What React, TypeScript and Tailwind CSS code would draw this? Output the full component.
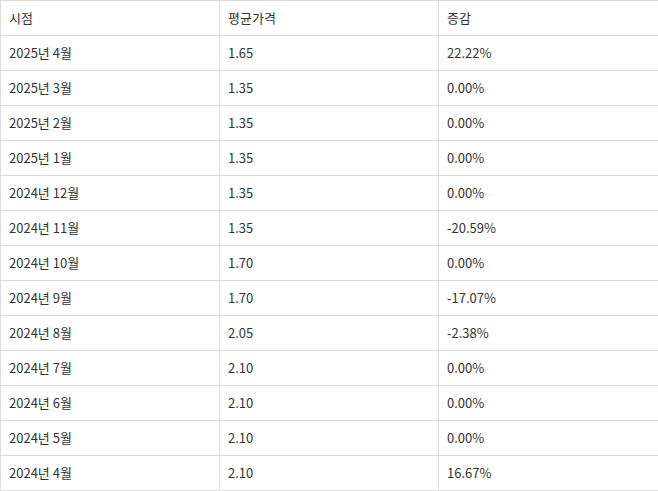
const rows: [string, string, string][] = [
  ["2025년 4월", "1.65", "22.22%"],
  ["2025년 3월", "1.35", "0.00%"],
  ["2025년 2월", "1.35", "0.00%"],
  ["2025년 1월", "1.35", "0.00%"],
  ["2024년 12월", "1.35", "0.00%"],
  ["2024년 11월", "1.35", "-20.59%"],
  ["2024년 10월", "1.70", "0.00%"],
  ["2024년 9월", "1.70", "-17.07%"],
  ["2024년 8월", "2.05", "-2.38%"],
  ["2024년 7월", "2.10", "0.00%"],
  ["2024년 6월", "2.10", "0.00%"],
  ["2024년 5월", "2.10", "0.00%"],
  ["2024년 4월", "2.10", "16.67%"],
];

export default function App() {
  const cell = "border border-[#dcdcdc] h-[35px] px-2 text-left align-middle font-normal";
  return (
    <div className="w-[658px] h-[491px] bg-white text-[#333] text-[13px] font-['Noto_Sans_CJK_KR','Noto_Sans',sans-serif]">
      <table className="w-[658px] border-collapse table-fixed">
        <colgroup>
          <col className="w-[219px]" />
          <col className="w-[219px]" />
          <col className="w-[220px]" />
        </colgroup>
        <thead>
          <tr>
            <th className={cell}>시점</th>
            <th className={cell}>평균가격</th>
            <th className={cell}>증감</th>
          </tr>
        </thead>
        <tbody>
          {rows.map(([d, p, c]) => (
            <tr key={d}>
              <td className={cell}>{d}</td>
              <td className={cell}>{p}</td>
              <td className={cell}>{c}</td>
            </tr>
          ))}
        </tbody>
      </table>
    </div>
  );
}
